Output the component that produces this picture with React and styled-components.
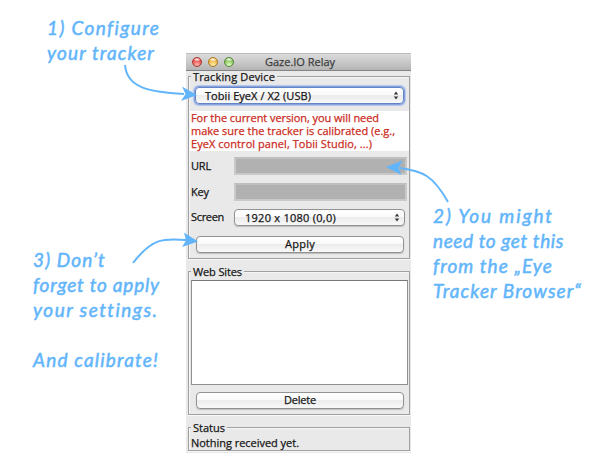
import React, { useLayoutEffect, useRef } from "react";
import styled, { createGlobalStyle, css } from "styled-components";

const Global = createGlobalStyle`
  * { box-sizing: border-box; }
  body { margin: 0; background: #fff; }
`;

const Page = styled.main`
  position: relative;
  width: 600px;
  height: 476px;
  overflow: hidden;
  display: grid;
  grid-template-columns: 186px 226px 188px;
  background: #fff;
  font: 500 11px/13px "Open Sans", "Noto Sans", sans-serif;
  color: #161616;
  -webkit-text-stroke: 0.25px currentColor;
`;

const LeftNotes = styled.aside`
  display: flex;
  flex-direction: column;
  padding: 15px 0 0 33px;
`;

const RightNotes = styled.aside`
  padding: 203px 0 0 21px;
`;

const Note = styled.p`
  margin: 0 0 ${(p) => p.$after || 0}px ${(p) => p.$indent || 0}px;
  display: flex;
  flex-direction: column;
  align-items: flex-start;
  color: #62b5fb;
  font: italic 400 19px/25px Lato, sans-serif;
  -webkit-text-stroke: 0.5px currentColor;
`;

const FitSpan = styled.span`
  display: inline-block;
  justify-self: start;
  white-space: pre;
`;

// Tracks a line of text out (or in) to the given width.
function Fit({ width, children }) {
  const ref = useRef(null);
  useLayoutEffect(() => {
    const el = ref.current;
    el.style.letterSpacing = "0px";
    const natural = el.getBoundingClientRect().width;
    el.style.letterSpacing = `${(width - natural) / children.length}px`;
  }, [width, children]);
  return <FitSpan ref={ref}>{children}</FitSpan>;
}

const Window = styled.section`
  margin-top: 53px;
  width: 225px;
  height: 400px;
  background: #e9e9e9;
`;

const TitleBar = styled.header`
  position: relative;
  z-index: 1;
  height: 18px;
  padding-bottom: 1px;
  display: grid;
  grid-template-columns: 79px 1fr;
  align-items: center;
  background: linear-gradient(#dcdcdc, #b5b5b5);
  border-top: 1px solid #bcbcbc;
  border-bottom: 1px solid #858585;
  color: #3d3d3d;
`;

const Lights = styled.div`
  display: flex;
  gap: 6px;
  padding-left: 6px;
`;

const lightColors = {
  red: ["#a93631", "#e4504a", "#ffb9ae"],
  amber: ["#a97720", "#edb443", "#fff3ae"],
  green: ["#538438", "#85c257", "#e2ffc4"],
};

const Light = styled.i`
  width: 10px;
  height: 10px;
  border-radius: 50%;
  border: 1px solid ${(p) => lightColors[p.$tone][0]};
  background: radial-gradient(ellipse 4px 2px at 50% 18%, #fff, transparent),
    radial-gradient(circle at 50% 90%, ${(p) => lightColors[p.$tone][2]}, ${(p) => lightColors[p.$tone][1]} 65%);
`;

const Group = styled.section`
  margin: ${(p) => p.$top}px 1px 0 2px;
  height: ${(p) => p.$height}px;
  border: 1px solid #a0a0a0;
  box-shadow: inset 1px 1px #f6f6f6, 0 1px #f8f8f8;
`;

const Legend = styled.h2`
  width: fit-content;
  height: 13px;
  margin: -7px 0 0 2px;
  padding: 0 2px;
  background: #e9e9e9;
  font: inherit;
`;

const control = css`
  display: flex;
  align-items: center;
  height: 17px;
  padding: 0 0 1px;
  border: 1px solid #929292;
  border-radius: 4px;
  background: linear-gradient(#fff 0%, #fafafa 45%, #ececec 50%, #f8f8f8 100%);
  color: #161616;
  font: inherit;
  box-shadow: 0 1px 1px #bdbdbd;
`;

const Button = styled.button`
  ${control}
  justify-content: center;
  width: 208px;
  padding-bottom: 2px;
  margin: ${(p) => p.$top}px 0 0 7px;
`;

const Select = styled.button`
  ${control}
  justify-content: space-between;
  width: ${(p) => p.$width}px;
  padding: 0 4px 1px 10px;
  ${(p) =>
    p.$focused &&
    css`
      margin: 4px 0 0 6px;
      padding-left: 9px;
      border-color: #6484c5;
      box-shadow: 0 0 0 1px #86a3df, 0 0 1px 2px #b3c5ec;
    `}
`;

const Stepper = () => (
  <svg width="6" height="9" viewBox="0 0 6 9" fill="#383838">
    <path d="M3 0.5 5.2 3.6H.8zM3 8.5 5.2 5.4H.8z" />
  </svg>
);

const Warning = styled.div`
  display: flex;
  flex-direction: column;
  align-items: flex-start;
  width: 219px;
  height: 40px;
  margin: 7px 0 0 1px;
  padding: 0 1px;
  background: #fff;
  color: #cb2b21;
`;

const Form = styled.div`
  display: grid;
  grid-template-columns: 43px 1fr;
  grid-template-rows: 18px 18px 17px;
  row-gap: 8px;
  align-items: center;
  margin: 6px 0 0 2px;
`;

const Field = styled.div`
  width: 173px;
  height: 18px;
  border: 2px solid #c9c9c9;
  border-top-color: #bfbfbf;
  background: #b1b1b1;
`;

const Label = styled.label`
  height: 15px;
`;

const List = styled.div`
  height: 105px;
  margin: 2px 1px 0 2px;
  border: 1px solid #909090;
  border-top: 1px solid #777;
  background: #fff;
`;

const StatusText = styled.div`
  padding-left: 2px;
  margin-top: 2px;
`;

const Arrows = styled.svg`
  position: absolute;
  z-index: 2;
  inset: 0;
  pointer-events: none;
`;

export default function App() {
  return (
    <>
      <Global />
      <Page>
        <LeftNotes>
          <Note $indent={14} $after={182}>
            <Fit width={113}>1) Configure</Fit>
            <Fit width={108}>your tracker</Fit>
          </Note>
          <Note $after={25}>
            <Fit width={73}>3) Don’t</Fit>
            <Fit width={127}>forget to apply</Fit>
            <Fit width={124}>your settings.</Fit>
          </Note>
          <Note>
            <Fit width={126}>And calibrate!</Fit>
          </Note>
        </LeftNotes>

        <Window>
          <TitleBar>
            <Lights>
              <Light $tone="red" />
              <Light $tone="amber" />
              <Light $tone="green" />
            </Lights>
            <Fit width={70}>Gaze.IO Relay</Fit>
          </TitleBar>

          <Group $top={5} $height={183}>
            <Legend><Fit width={82}>Tracking Device</Fit></Legend>
            <Select $focused $width={209}>
              <Fit width={106}>Tobii EyeX / X2 (USB)</Fit>
              <Stepper />
            </Select>
            <Warning>
              <Fit width={188}>For the current version, you will need</Fit>
              <Fit width={204}>make sure the tracker is calibrated (e.g.,</Fit>
              <Fit width={181}>EyeX control panel, Tobii Studio, ...)</Fit>
            </Warning>
            <Form>
              <Label><Fit width={20}>URL</Fit></Label>
              <Field />
              <Label><Fit width={18}>Key</Fit></Label>
              <Field />
              <Label><Fit width={33}>Screen</Fit></Label>
              <Select $width={171}>
                <Fit width={91}>1920 x 1080 (0,0)</Fit>
                <Stepper />
              </Select>
            </Form>
            <Button $top={10}><Fit width={30}>Apply</Fit></Button>
          </Group>

          <Group $top={12} $height={144}>
            <Legend><Fit width={49}>Web Sites</Fit></Legend>
            <List />
            <Button $top={7}><Fit width={32}>Delete</Fit></Button>
          </Group>

          <Group $top={12} $height={24}>
            <Legend><Fit width={32}>Status</Fit></Legend>
            <StatusText><Fit width={108}>Nothing received yet.</Fit></StatusText>
          </Group>
        </Window>

        <RightNotes>
          <Note>
            <Fit width={121}>2) You might</Fit>
            <Fit width={131}>need to get this</Fit>
            <Fit width={120}>from the „Eye</Fit>
            <Fit width={149}>Tracker Browser“</Fit>
          </Note>
        </RightNotes>

        <Arrows width="600" height="476" viewBox="0 0 600 476">
          <g fill="none" stroke="#62b5fb" strokeWidth="2">
            <path d="M125 65C127 88 149 92 184 94" />
            <path d="M133 263C152 238 164 238 186 240" />
            <path d="M448 202C433 175 422 171 400 168" />
          </g>
          <g fill="#62b5fb">
            <path d="M197 95 181 101 185.5 94 182 86.5z" />
            <path d="M198 241.5 182 247 186 240.5 184 232.5z" />
            <path d="M386 167 402.500 160.500 398.500 168 401.500 175z" />
          </g>
        </Arrows>
      </Page>
    </>
  );
}
